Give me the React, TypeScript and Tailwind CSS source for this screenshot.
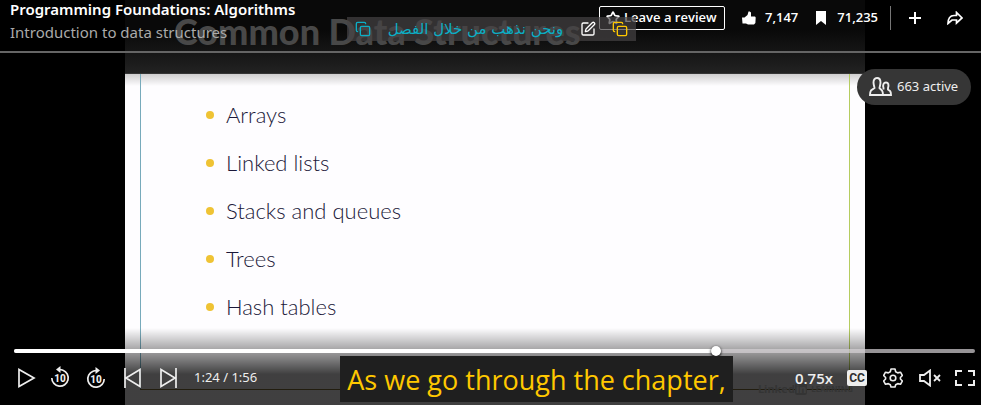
import React from "react";
import { Copy, SquarePen, Star } from "lucide-react";

const topics = ["Arrays", "Linked lists", "Stacks and queues", "Trees", "Hash tables"];

function IconButton({ label, children, className = "" }: { label: string; children: React.ReactNode; className?: string }) {
  return (
    <button type="button" aria-label={label} className={`flex h-6 shrink-0 items-center justify-center ${className}`}>
      {children}
    </button>
  );
}

function SkipTen({ forward = false }: { forward?: boolean }) {
  return (
    <svg width="20" height="24" viewBox="0 0 20 24" fill="none" stroke="currentColor" strokeWidth="1.7">
      {forward ? (
        <>
          <path d="M18.2 13A8.2 8.2 0 1 1 7 5.3Q8.500 4.500 11 4.500" />
          <path d="M9.500 1l4.500 3.500-4.500 3.500z" fill="currentColor" stroke="none" />
        </>
      ) : (
        <>
          <path d="M1.800 12A8.200 8.200 0 1 0 13 4.300Q11.500 3.500 9 3.500" />
          <path d="M10.500 0L6 3.500 10.500 7z" fill="currentColor" stroke="none" />
        </>
      )}
      <text x="10" y={forward ? 17 : 16} textAnchor="middle" fontSize="10" fontWeight="800" fontFamily="Roboto" fill="currentColor" stroke="none">10</text>
    </svg>
  );
}

function Slide() {
  return (
    <main className="flex flex-1 justify-center pl-[9px]">
      <div className="flex w-[740px] max-w-full flex-col bg-[#fefdff] text-[#1b1839]">
        <h1 className="h-[74px] border-b border-[#353535] bg-linear-to-b from-[#090909] from-40% to-[#222222] pt-[11px] pl-[49px] font-['Lato',sans-serif] text-[36px] leading-10 font-black whitespace-nowrap text-[#484848]">
          Common Data Structures
        </h1>
        <div className="flex flex-1 flex-col bg-linear-to-b from-[#cfcecf] to-[#fefdff] to-[12px] px-[15px] pb-[15px]">
          <div className="flex flex-1 border-b border-[#88733a]">
            <div className="w-px bg-[#77aabb]" />
            <div className="flex flex-1 flex-col justify-between">
              <ul className="flex flex-col gap-5 pt-[27px] pl-[65px] font-['Lato',sans-serif] text-[22px] leading-7 font-light">
                {topics.map((topic) => (
                  <li key={topic} className="flex items-center gap-3">
                    <span className="size-2 rounded-full bg-[#efc334]" />
                    {topic}
                  </li>
                ))}
              </ul>
              <p className="-mr-1 -mb-[6px] flex items-center justify-end text-[11px] leading-3 font-bold text-[#d0d0d0]">
                Linked<span className="mr-1 rounded-xs bg-[#d0d0d0] px-px text-[#fefdff]">in</span>
                <span className="text-[8px]">LEARNING</span>
              </p>
            </div>
            <div className="w-px bg-[#b5cc60]" />
          </div>
        </div>
      </div>
    </main>
  );
}

function Header() {
  return (
    <header className="absolute inset-x-0 top-0 flex h-[53px] items-start justify-between border-b-2 border-[#656565] pr-[18px] pl-[10px]">
      <div className="-mt-[2px] whitespace-nowrap">
        <h2 className="text-[15px] leading-[22px] font-semibold">Programming Foundations: Algorithms</h2>
        <p className="text-[15px] leading-6 text-[#aaaaaa]">Introduction to data structures</p>
      </div>
      <div className="flex items-center pt-[6px] font-['Open_Sans',sans-serif] text-[13px] font-semibold">
        <button type="button" className="flex h-6 w-[126px] items-center gap-1 rounded-xs border border-white pl-[6px] whitespace-nowrap">
          <Star size={14} strokeWidth={3} className="shrink-0" />
          Leave a review
        </button>
        <button type="button" className="ml-[17px] flex items-center gap-[9px]">
          <svg width="14" height="14" viewBox="0 0 14 14" fill="currentColor"><path d="M0 6.500h2.500L5.500 4 6.500 0.500h1.200L9 1.500V5.500h4l0.700 1-0.300 5.500-1.400 1.500H6L4 12.500H0.500z" /></svg>
          7,147
        </button>
        <button type="button" className="ml-[18px] flex items-center gap-[11px]">
          <svg width="10" height="14" viewBox="0 0 10 14" fill="currentColor"><path d="M0 0h10v14L5 10 0 14z" /></svg>
          71,235
        </button>
        <span className="ml-3 h-6 w-px bg-[#777777]" />
        <IconButton label="Add" className="ml-[18px]">
          <svg width="12" height="12" viewBox="0 0 12 12" stroke="currentColor" strokeWidth="2"><path d="M6 0v12M0 6h12" /></svg>
        </IconButton>
        <IconButton label="Share" className="ml-[26px]">
          <svg width="16" height="14" viewBox="0 0 16 14" fill="none" stroke="currentColor" strokeWidth="1.700"><path d="M9.500 1.500v3H7c-4 0-6 3-6 8l4-3.500h4.500v3L15 7z" /></svg>
        </IconButton>
      </div>
    </header>
  );
}

function Translation() {
  return (
    <div className="absolute inset-x-0 top-[17px] flex justify-center pl-[2px]">
      <div className="flex h-6 w-[289px] items-center bg-[#464345]/70 pl-2">
        <IconButton label="Copy translation" className="text-[#0caec5]"><Copy size={16} /></IconButton>
        <p dir="rtl" lang="ar" className="flex-1 text-center font-['DejaVu_Sans',sans-serif] text-[15px] leading-6 whitespace-nowrap text-[#0caec5]">ونحن نذهب من خلال الفصل</p>
        <IconButton label="Edit"><SquarePen size={16} /></IconButton>
        <IconButton label="Copy caption" className="mr-2 ml-4 text-[#ffc800]"><Copy size={16} /></IconButton>
      </div>
    </div>
  );
}

function ActiveViewers() {
  return (
    <div className="absolute top-[69px] right-[10px] flex h-9 w-[114px] items-center gap-[5px] rounded-full bg-[#363636] pl-3 text-[13px] text-[#eeeeee]">
      <svg width="23" height="20" viewBox="0 0 23 20" fill="none" stroke="currentColor" strokeWidth="1.900" className="shrink-0">
        <path d="M8 1C5.500 1 4.500 3 4.500 5.500S5.500 10 5.500 11L2 13.500Q1 15 1 18h13q0-3-1-4.500L10.500 11c0-1 1-3 1-5.500S10.500 1 8 1z" />
        <path d="M14.500 12.500v-1.500C13.500 8 14.500 5.500 17 5.500S20 8 19 11v1.500l2 1.500q1 1 1 4h-8" />
      </svg>
      663 active
    </div>
  );
}

function Controls() {
  return (
    <footer className="absolute inset-x-0 bottom-0 h-[77px] bg-linear-to-b from-transparent to-black/75 to-60%">
      <div className="relative mt-[21px] mr-[6px] ml-[14px] h-1 rounded-full bg-[#d5d2d5]/70">
        <div className="h-1 w-[73%] rounded-full bg-white" />
        <input type="range" aria-label="Playback position" min={0} max={116} defaultValue={84} className="absolute inset-0 h-1 w-full opacity-0" />
        <span className="absolute -top-[3px] left-[73%] size-[10px] -translate-x-1/2 rounded-full bg-white shadow-sm shadow-black" />
      </div>
      <div className="mt-[13px] flex items-center justify-between pr-[6px] pl-[18px] text-[#eeeeee]">
        <div className="flex items-center">
          <IconButton label="Play"><svg width="18" height="20" viewBox="0 0 18 20" fill="none" stroke="currentColor" strokeWidth="1.700"><path d="M1 1.500v17L16 10z" /></svg></IconButton>
          <IconButton label="Back 10 seconds" className="ml-[14px]"><SkipTen /></IconButton>
          <IconButton label="Forward 10 seconds" className="ml-4"><SkipTen forward /></IconButton>
          <IconButton label="Previous" className="ml-[18px]"><svg width="18" height="20" viewBox="0 0 18 20" fill="none" stroke="currentColor" strokeWidth="1.700"><path d="M1 0v20M16 1.500v17L2 10z" /></svg></IconButton>
          <IconButton label="Next" className="ml-[18px]"><svg width="18" height="20" viewBox="0 0 18 20" fill="none" stroke="currentColor" strokeWidth="1.700"><path d="M16 0v20M1 1.500v17L15 10z" /></svg></IconButton>
          <span className="ml-4 text-[13px]">1:24 / 1:56</span>
        </div>
        <div className="flex items-center">
          <button type="button" className="font-['Open_Sans',sans-serif] text-[15px] font-semibold">0.75x</button>
          <IconButton label="Captions" className="ml-[14px]">
            <span className="flex h-4 w-5 items-center justify-center rounded-xs bg-[#eeeeee] font-['Roboto',sans-serif] text-[12px] font-bold text-[#303030]">CC</span>
          </IconButton>
          <IconButton label="Settings" className="ml-4">
            <svg width="20" height="20" viewBox="0 0 20 20" fill="none" stroke="currentColor" strokeWidth="1.600" strokeLinejoin="round">
              <path d="M8 1h4l0.700 2.800 2 1.100 2.800-0.700 1.900 3.300-2 2v1.500l2 2-1.900 3.300-2.800-0.700-2 1.100L12 19H8l-0.700-2.300-2-1.100-2.800 0.700L0.600 13l2-2V9.500l-2-2 1.900-3.300 2.800 0.700 2-1.100z" />
              <circle cx="10" cy="10" r="2.800" />
            </svg>
          </IconButton>
          <IconButton label="Unmute" className="ml-4">
            <svg width="22" height="18" viewBox="0 0 22 18" fill="none" stroke="currentColor" strokeWidth="1.800"><path d="M1 6v6h4l6 4.500v-15L5 6zM15 6l6 6M21 6l-6 6" /></svg>
          </IconButton>
          <IconButton label="Full screen" className="ml-[14px]">
            <svg width="20" height="16" viewBox="0 0 20 16" fill="none" stroke="currentColor" strokeWidth="2"><path d="M1 6V1h6M13 1h6v5M19 10v5h-6M7 15H1v-5" /></svg>
          </IconButton>
        </div>
      </div>
    </footer>
  );
}

function Caption() {
  return (
    <div className="absolute inset-x-0 bottom-[3px] flex justify-center pl-[92px]">
      <p className="h-[46px] bg-[#1f1f1f] px-[7px] font-['Open_Sans',sans-serif] text-[27px] leading-[48px] whitespace-nowrap text-[#ffc800]">As we go through the chapter,</p>
    </div>
  );
}

export default function App() {
  return (
    <div className="h-screen bg-white pb-1 font-['Noto_Sans',sans-serif] text-white">
      <div className="relative flex h-full flex-col overflow-hidden bg-black">
        <Slide />
        <Header />
        <Translation />
        <ActiveViewers />
        <Controls />
        <Caption />
      </div>
    </div>
  );
}
